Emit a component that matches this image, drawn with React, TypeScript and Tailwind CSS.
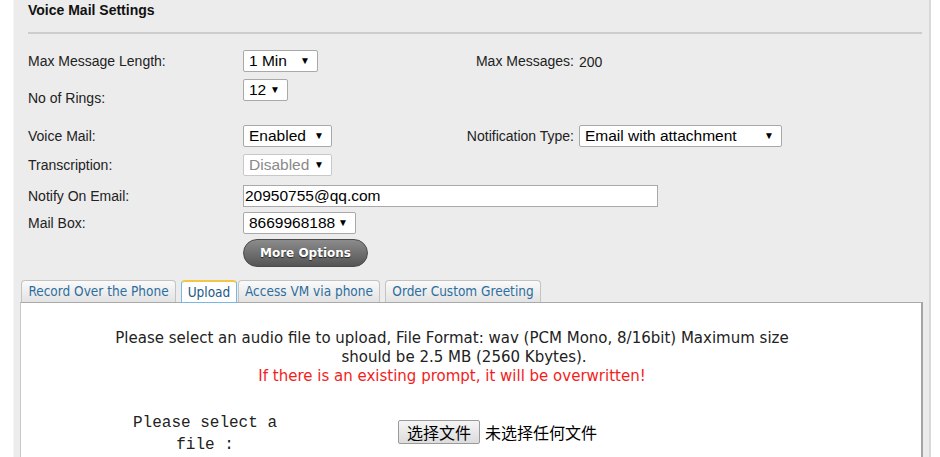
const arial = { fontFamily: '"Liberation Sans", Arial, sans-serif' };

function FakeSelect({ value, width, disabled }: { value: string; width: string; disabled?: boolean }) {
  return (
    <div
      className={`${width} h-[22px] flex items-center justify-between bg-white border rounded-[2px] pl-[5px] pr-[7px] text-[15.5px] leading-none ${
        disabled ? 'border-[#c8c8c8] text-[#8a8a8a]' : 'border-[#a9a9a9] text-black'
      }`}
      style={arial}
    >
      <span>{value}</span>
      <span className="text-[10px] text-black">▼</span>
    </div>
  );
}

function Label({ children, className = '' }: { children: React.ReactNode; className?: string }) {
  return <div className={`w-[215px] text-[14px] leading-[16px] text-[#222] ${className}`}>{children}</div>;
}

const tabs = [
  { label: 'Record Over the Phone', cls: 'ml-[1px] w-[155px]' },
  { label: 'Upload', cls: 'ml-[5px] w-[56px]', active: true },
  { label: 'Access VM via phone', cls: 'ml-[1px] w-[142px]' },
  { label: 'Order Custom Greeting', cls: 'ml-[5px] w-[156px]' },
];

export default function App() {
  return (
    <div className="w-[940px] h-[457px] overflow-hidden bg-white" style={arial}>
      <div className="ml-[13px] w-[918px] h-full bg-[#ececec] border-l border-[#f6f6f6] border-r-2 border-r-[#d9d9d9] flex flex-col">
        <div className="pl-[14px] pt-[2px] text-[14px] leading-[16px] font-bold text-[#111]">Voice Mail Settings</div>
        <div className="ml-[14px] mr-[7px] mt-[14px] h-[2px] bg-[#cdcdcd]" />

        <div className="pl-[14px] flex flex-col">
          <div className="mt-[16px] flex items-center h-[22px]">
            <Label>Max Message Length:</Label>
            <div className="w-[220px]">
              <FakeSelect value="1 Min" width="w-[75px]" />
            </div>
            <div className="w-[111px] whitespace-nowrap text-right text-[14px] text-[#222]">Max Messages:</div>
            <div className="ml-[5px] text-[14px] text-[#222] mt-[2px]">200</div>
          </div>

          <div className="mt-[7px] flex items-start">
            <Label className="pt-[11px]">No of Rings:</Label>
            <FakeSelect value="12" width="w-[45px]" />
          </div>

          <div className="mt-[19px] flex items-center h-[22px]">
            <Label>Voice Mail:</Label>
            <div className="w-[220px]">
              <FakeSelect value="Enabled" width="w-[89px]" />
            </div>
            <div className="w-[111px] whitespace-nowrap text-right text-[14px] text-[#222]">Notification Type:</div>
            <div className="ml-[5px]">
              <FakeSelect value="Email with attachment" width="w-[203px]" />
            </div>
          </div>

          <div className="mt-[6px] flex items-center h-[23px]">
            <Label>Transcription:</Label>
            <FakeSelect value="Disabled" width="w-[89px]" disabled />
          </div>

          <div className="mt-[9px] flex items-center h-[22px]">
            <Label>Notify On Email:</Label>
            <div className="w-[415px] h-[22px] bg-white border border-[#a9a9a9] px-[1px] flex items-center text-[15.5px] text-black">
              20950755@qq.com
            </div>
          </div>

          <div className="mt-[5px] flex items-center h-[22px]">
            <Label>Mail Box:</Label>
            <FakeSelect value="8669968188" width="w-[113px]" />
          </div>

          <div className="mt-[5px] flex">
            <div className="w-[215px]" />
            <button
              className="w-[125px] h-[28px] rounded-full border border-[#4a4a4a] bg-gradient-to-b from-[#8c8c8c] to-[#555] text-white text-[12px] font-bold [text-shadow:0_1px_1px_#222]"
              style={{ fontFamily: '"DejaVu Sans", Verdana, sans-serif' }}
            >
              More Options
            </button>
          </div>
        </div>

        <div className="mx-[6px] mt-[13px] flex-1 flex flex-col" style={{ fontFamily: '"DejaVu Sans Condensed", "DejaVu Sans", Tahoma, sans-serif' }}>
          <div className="flex items-end h-[22px]">
            {tabs.map((t) =>
              t.active ? (
                <div
                  key={t.label}
                  className={`${t.cls} h-[23px] -mb-px relative z-10 flex items-center justify-center bg-white border border-[#79b7e7] border-t-2 border-t-[#f3c64a] rounded-t-[4px] text-[13.5px] text-[#1d5987]`}
                >
                  {t.label}
                </div>
              ) : (
                <div
                  key={t.label}
                  className={`${t.cls} h-[22px] flex items-center justify-center bg-gradient-to-b from-[#fafafa] to-[#e3e3e3] border border-b-0 border-[#c3c3c3] rounded-t-[4px] text-[13.5px] text-[#2e6e9e]`}
                >
                  {t.label}
                </div>
              )
            )}
          </div>
          <div className="flex-1 bg-white border-t border-t-[#a9a9a9] border-l border-l-[#c9c9c9] border-r-2 border-r-[#a5a5a5]">
            <div
              className="ml-[76px] w-[710px] pt-[26px] text-center text-[15px] leading-[19px] text-[#222] whitespace-nowrap"
              style={{ fontFamily: '"DejaVu Sans", Tahoma, sans-serif' }}
            >
              Please select an audio file to upload, File Format: wav (PCM Mono, 8/16bit) Maximum size
              <br />
              <span className="pl-[24px]">should be 2.5 MB (2560 Kbytes).</span>
              <div className="text-[#f21d1d]">If there is an existing prompt, it will be overwritten!</div>
            </div>
            <div className="mt-[26px] flex items-center">
              <div
                className="ml-[108px] w-[152px] text-center text-[16px] leading-[22px] text-[#222]"
                style={{ fontFamily: '"Liberation Mono", "Courier New", monospace' }}
              >
                Please select a file :
              </div>
              <div
                className="ml-[117px] -mt-[4px] flex items-center text-[16px] text-black"
                style={{ fontFamily: '"Noto Sans CJK SC", sans-serif' }}
              >
                <button className="w-[82px] h-[24px] border border-[#9a9a9a] rounded-[2px] bg-gradient-to-b from-[#f5f5f5] to-[#dcdcdc] text-[16px] leading-none">
                  选择文件
                </button>
                <span className="ml-[5px] leading-none">未选择任何文件</span>
              </div>
            </div>
          </div>
        </div>
      </div>
    </div>
  );
}
